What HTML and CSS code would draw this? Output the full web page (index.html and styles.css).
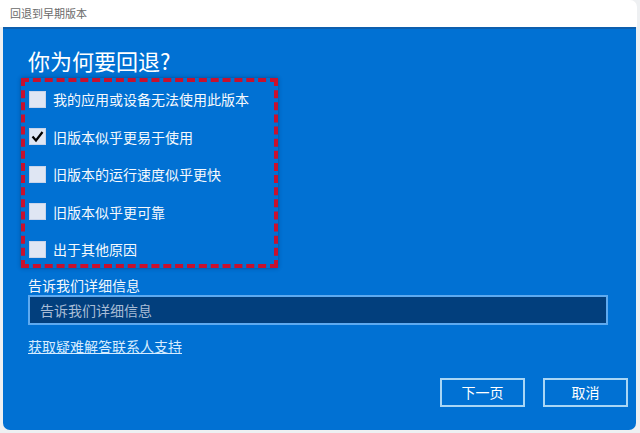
FILE: index.html
```html
<!DOCTYPE html>
<html lang="zh-CN">
<head>
<meta charset="utf-8">
<title>回退到早期版本</title>
<link rel="stylesheet" href="styles.css">
</head>
<body>
<div class="window">
  <div class="titlebar">回退到早期版本</div>
  <div class="panel">
    <h1 class="heading">你为何要回退?</h1>
    <div class="reasons">
      <label class="reason"><span class="box"></span><span class="text">我的应用或设备无法使用此版本</span></label>
      <label class="reason"><span class="box"><svg viewBox="0 0 17 17" width="17" height="17"><polyline points="3.5,8.5 7,12.5 13.5,4" fill="none" stroke="#000" stroke-width="2.2"/></svg></span><span class="text">旧版本似乎更易于使用</span></label>
      <label class="reason"><span class="box"></span><span class="text">旧版本的运行速度似乎更快</span></label>
      <label class="reason"><span class="box"></span><span class="text">旧版本似乎更可靠</span></label>
      <label class="reason"><span class="box"></span><span class="text">出于其他原因</span></label>
    </div>
    <div class="field-label">告诉我们详细信息</div>
    <div class="input">告诉我们详细信息</div>
    <a class="link" href="#">获取疑难解答联系人支持</a>
    <div class="actions">
      <div class="btn">下一页</div>
      <div class="btn">取消</div>
    </div>
  </div>
</div>
</body>
</html>
```

FILE: styles.css
```css
html, body {
  margin: 0;
  padding: 0;
  width: 640px;
  height: 433px;
  overflow: hidden;
  background: #eef0f2;
  font-family: "Microsoft YaHei", "Noto Sans CJK SC", "Noto Sans", sans-serif;
}

.window {
  width: 637px;
  display: flex;
  flex-direction: column;
}

.titlebar {
  height: 27px;
  background: #ffffff;
  border-top-right-radius: 7px;
  color: #6a6a6a;
  font-size: 11px;
  line-height: 27px;
  padding-left: 10px;
  box-sizing: border-box;
}

.panel {
  margin-left: 3px;
  width: 633px;
  height: 403px;
  box-sizing: border-box;
  background: #0171d3;
  border-top: 2px solid #0d5fae;
  border-bottom-left-radius: 7px;
  border-bottom-right-radius: 7px;
  padding: 16px 8px 0 25px;
  display: flex;
  flex-direction: column;
  color: #f4f8fc;
}

.heading {
  margin: 0;
  font-size: 22px;
  font-weight: 400;
  line-height: 30px;
  color: #ffffff;
}

.reasons {
  margin: 3px 0 0 -7px;
  width: 257px;
  box-sizing: border-box;
  border: 4px dashed #c8112e;
  box-shadow: 0 0 4px rgba(0, 30, 80, 0.45);
  padding: 8.5px 4px 6.5px 4px;
  display: flex;
  flex-direction: column;
  gap: 20.5px;
}

.reason {
  display: flex;
  align-items: center;
  gap: 7px;
  height: 17px;
}

.box {
  width: 17px;
  height: 17px;
  flex: none;
  background: #dfe6f3;
  box-sizing: border-box;
  border: 1px solid #c8d4ea;
  display: flex;
}

.box svg {
  margin: -1px;
}

.text {
  font-size: 14px;
  line-height: 20px;
  color: #f6f9fd;
}

.field-label {
  margin-top: 7px;
  font-size: 14px;
  line-height: 20px;
}

.input {
  width: 580px;
  height: 30px;
  box-sizing: border-box;
  background: #023f7d;
  border: 2px solid #5eaaf0;
  color: #a9bdd6;
  font-size: 14px;
  line-height: 26px;
  padding-left: 10px;
}

.link {
  margin-top: 11px;
  align-self: flex-start;
  font-size: 14px;
  line-height: 20px;
  color: #d6ecff;
  text-decoration: underline;
}

.actions {
  margin-top: 22px;
  display: flex;
  justify-content: flex-end;
  gap: 18px;
}

.btn {
  width: 85px;
  height: 29px;
  box-sizing: border-box;
  border: 2px solid #a9d6f5;
  color: #ffffff;
  font-size: 14px;
  line-height: 25px;
  text-align: center;
}
```
